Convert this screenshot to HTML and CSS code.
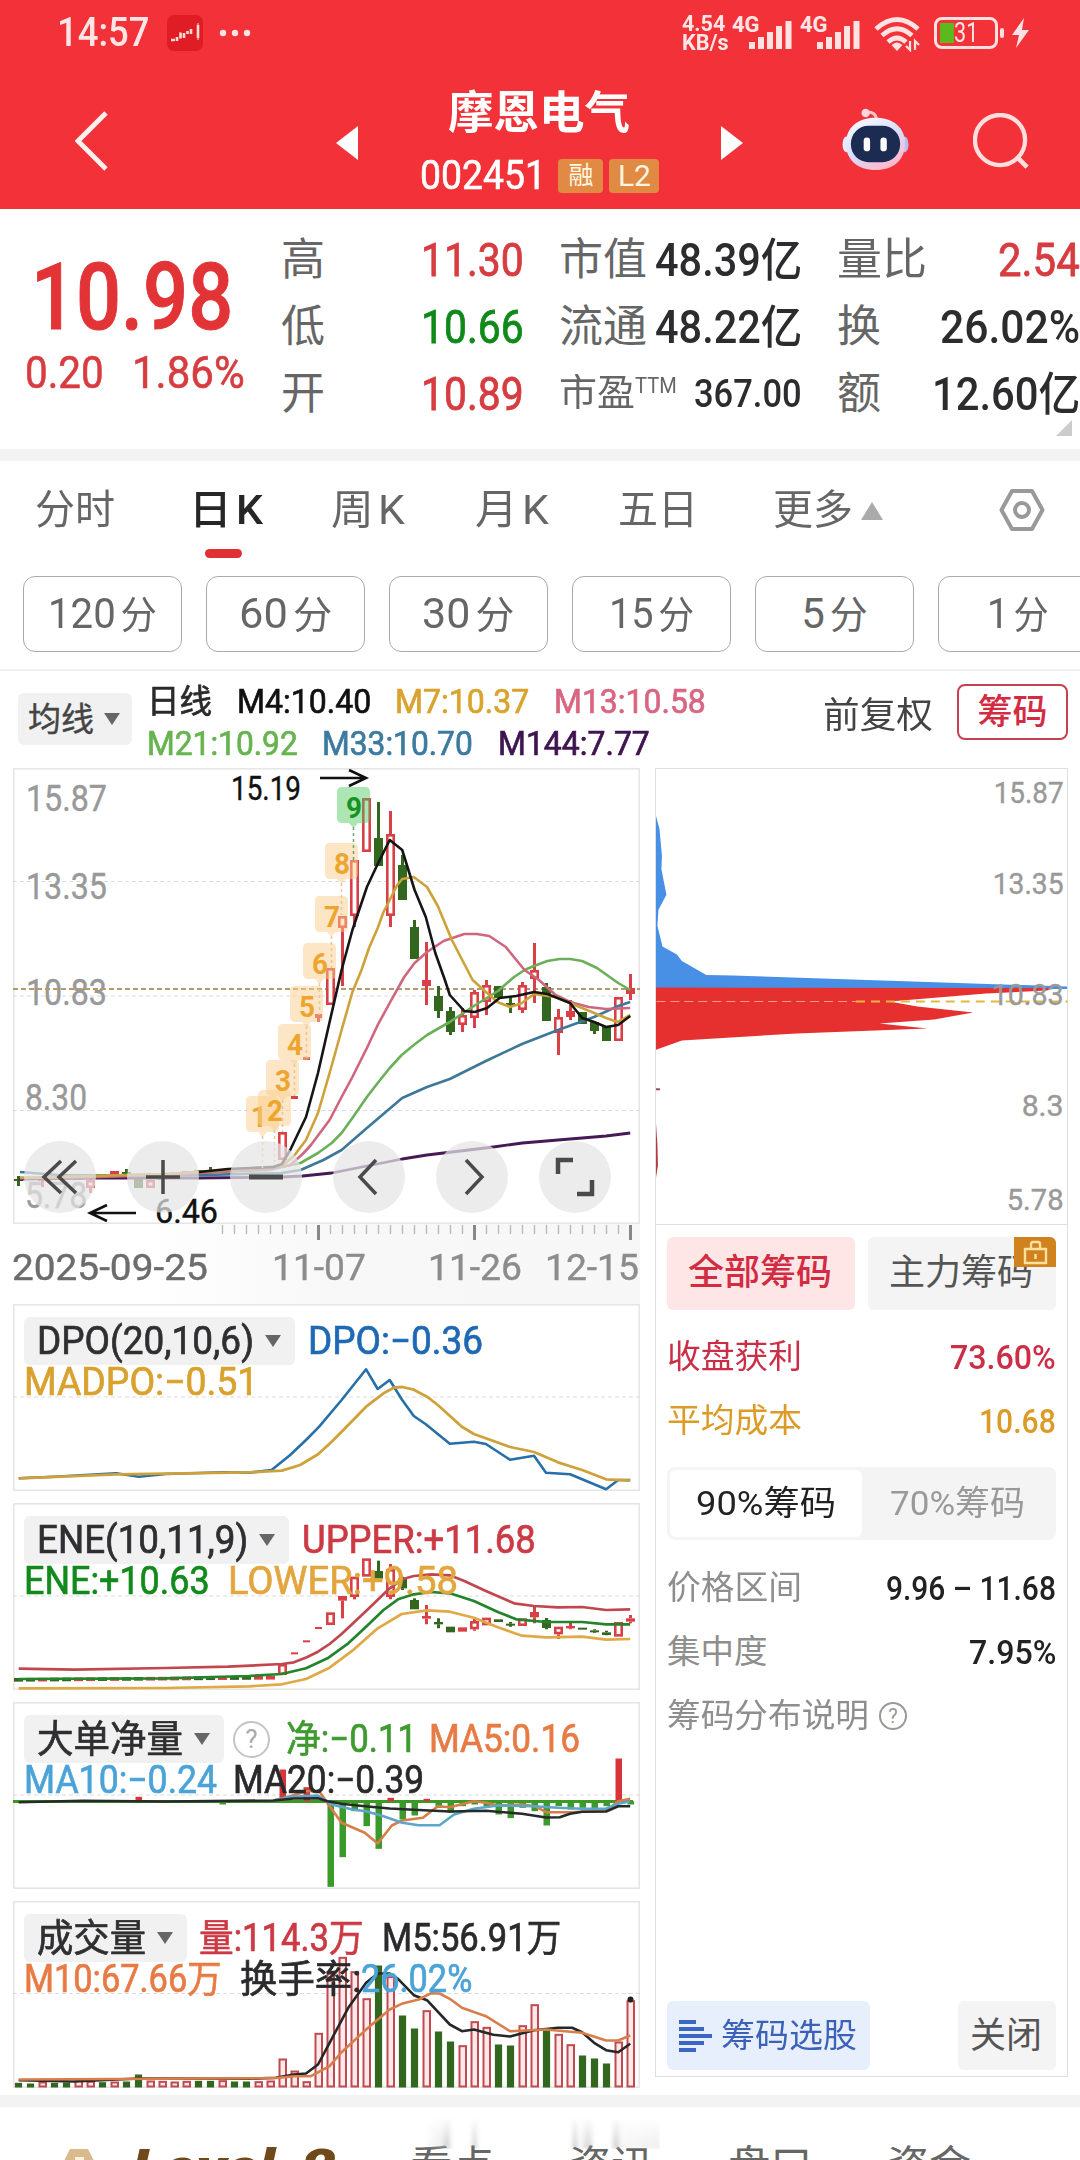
FILE: index.html
```html
<!DOCTYPE html>
<html lang="zh-CN">
<head>
<meta charset="utf-8">
<title>摩恩电气 002451</title>
<link rel="stylesheet" href="styles.css">
</head>
<body>
<div class="app">
  <header class="header">
    <div class="status">
      <span class="clock" data-w="92">14:57</span>
      <svg class="app-icon" viewBox="0 0 36 36"><rect width="36" height="36" rx="7" fill="#e01d24"/><path d="M4 25h4M10 22v4M13.500 17.500v6M17 18v5M20.500 19v-3M24 14v5M31 10v13" stroke="#ffdcd4" stroke-width="2.600" fill="none"/><path d="M31 8v17" stroke="#ffdcd4" stroke-width="1"/></svg>
      <svg class="more-dots" viewBox="0 0 32 8"><g fill="#ffe3e3"><circle cx="4" cy="4" r="3.200"/><circle cx="16" cy="4" r="3.200"/><circle cx="28" cy="4" r="3.200"/></g></svg>
      <span class="grow"></span>
      <span class="net"><span data-w="47">4.54</span><span data-w="47">KB/s</span></span>
      <span class="signal"><span class="gen" data-w="28">4G</span><svg viewBox="0 0 44 32"><path d="M4 31v-7M13 31v-12M22 31v-17M31 31v-23M40.500 31v-28" stroke="#ffe3e3" stroke-width="6"/></svg></span>
      <span class="signal"><span class="gen" data-w="28">4G</span><svg viewBox="0 0 44 32"><path d="M4 31v-7M13 31v-12M22 31v-17M31 31v-23M40.500 31v-28" stroke="#ffe3e3" stroke-width="6"/></svg></span>
      <svg class="wifi" viewBox="0 0 46 36"><g fill="none" stroke="#ffe3e3" stroke-width="4.800"><path d="M2 13Q23 -6 44 13"/><path d="M8 19.500Q23 6 38 19.500"/><path d="M14 26Q23 18 32 26"/></g><path d="M17.500 29Q23 24 28.500 29L23 35Z" fill="#ffe3e3"/><path d="M36 25v9l-4-4M41 34v-9l4 4" fill="none" stroke="#ffe3e3" stroke-width="2.200"/></svg>
      <span class="battery"><span data-w="24">31</span></span>
      <svg class="bolt" viewBox="0 0 17 30"><path d="M12 0L0 17h7L4 30L17 12h-7Z" fill="#ffe3e3"/></svg>
    </div>
    <div class="nav">
      <svg class="back" viewBox="0 0 33 60"><path d="M31 2L3 30L31 58" fill="none" stroke="#fff0f0" stroke-width="4.800"/></svg>
      <svg class="prev" viewBox="0 0 22 34"><path d="M22 0L0 17L22 34Z" fill="#fff"/></svg>
      <div class="title">
        <div class="name" data-w="182">摩恩电气</div>
        <div class="code"><span data-w="126">002451</span><span class="chip chip-rong">融</span><span class="chip chip-l2">L2</span></div>
      </div>
      <svg class="next" viewBox="0 0 22 34"><path d="M0 0L22 17L0 34Z" fill="#fff"/></svg>
      <svg class="robot" viewBox="0 0 68 64">
        <defs><linearGradient id="shell" x1="0" y1="0" x2="0.600" y2="1"><stop offset="0" stop-color="#fff"/><stop offset=".6" stop-color="#d5dcfa"/><stop offset="1" stop-color="#ffb9cc"/></linearGradient></defs>
        <path d="M26 4Q34 4 35 11" fill="none" stroke="#ffc4cc" stroke-width="3"/><circle cx="24" cy="5" r="4.300" fill="#ffd6de"/>
        <ellipse cx="4.500" cy="37" rx="4" ry="8" fill="#e8eaff"/><ellipse cx="63.500" cy="37" rx="4" ry="8" fill="#b7bdf5"/>
        <path d="M34 10C52 10 64 20 64 36C64 53 52 63 34 63C16 63 4 53 4 36C4 20 16 10 34 10Z" fill="url(#shell)"/>
        <rect x="9" y="18" width="50" height="37" rx="18" fill="#1c2b52"/>
        <rect x="22" y="30" width="6.500" height="14" rx="3.200" fill="#fff"/><rect x="39" y="30" width="6.500" height="14" rx="3.200" fill="#fff"/>
      </svg>
      <svg class="search" viewBox="0 0 58 58"><circle cx="27.500" cy="27.500" r="25.500" fill="none" stroke="#ffdede" stroke-width="4.400"/><path d="M44 44L55 55" stroke="#ffdede" stroke-width="4.800"/></svg>
    </div>
  </header>

  <section class="quote">
    <div class="last">
      <div class="price" data-w="202">10.98</div>
      <div class="change"><span data-w="79">0.20</span><span data-w="113">1.86%</span></div>
    </div>
    <div class="stats">
      <div class="stat"><span class="k">高</span><span class="v up" data-w="103">11.30</span></div>
      <div class="stat"><span class="k" data-w="88">市值</span><span class="v" data-w="147">48.39亿</span></div>
      <div class="stat"><span class="k" data-w="90">量比</span><span class="v up" data-w="82">2.54</span></div>
      <div class="stat"><span class="k">低</span><span class="v down" data-w="103">10.66</span></div>
      <div class="stat"><span class="k" data-w="88">流通</span><span class="v" data-w="147">48.22亿</span></div>
      <div class="stat"><span class="k">换</span><span class="v" data-w="140">26.02%</span></div>
      <div class="stat"><span class="k">开</span><span class="v up" data-w="103">10.89</span></div>
      <div class="stat small"><span class="k"><span data-w="76">市盈</span><sup data-w="42">TTM</sup></span><span class="v" data-w="108">367.00</span></div>
      <div class="stat"><span class="k">额</span><span class="v" data-w="148">12.60亿</span></div>
    </div>
    <svg class="corner" viewBox="0 0 16 16"><path d="M16 0V16H0Z" fill="#ccc"/></svg>
  </section>

  <nav class="tabs">
    <span class="tab" data-w="80">分时</span>
    <span class="tab on"><span data-w="74">日<i>K</i></span></span>
    <span class="tab" data-w="74">周<i>K</i></span>
    <span class="tab" data-w="74">月<i>K</i></span>
    <span class="tab" data-w="80">五日</span>
    <span class="tab more"><span data-w="80">更多</span><svg viewBox="0 0 22 18"><path d="M11 0L22 18H0Z" fill="#aaa"/></svg></span>
    <svg class="gear" viewBox="0 0 46 44"><path d="M13 3H33L43.500 22L33 41H13L2.500 22Z" fill="none" stroke="#999" stroke-width="4" stroke-linejoin="round"/><circle cx="23" cy="22" r="7" fill="none" stroke="#999" stroke-width="4"/></svg>
  </nav>
  <div class="periods">
    <span class="period"><span data-w="109">120<i>分</i></span></span>
    <span class="period"><span data-w="93">60<i>分</i></span></span>
    <span class="period"><span data-w="92">30<i>分</i></span></span>
    <span class="period"><span data-w="85">15<i>分</i></span></span>
    <span class="period"><span data-w="67">5<i>分</i></span></span>
    <span class="period"><span data-w="62">1<i>分</i></span></span>
  </div>

  <section class="ma-bar">
    <span class="pick pick-ma"><span data-w="66">均线</span><b class="caret"></b></span>
    <div class="ma-list">
      <div class="ma-row"><span class="ink" data-w="65">日线</span><span class="c-black" data-w="134">M4:10.40</span><span class="c-gold" data-w="134">M7:10.37</span><span class="c-pink" data-w="152">M13:10.58</span></div>
      <div class="ma-row"><span class="c-green" data-w="151">M21:10.92</span><span class="c-blue" data-w="151">M33:10.70</span><span class="c-violet" data-w="152">M144:7.77</span></div>
    </div>
    <span class="adjust" data-w="110">前复权</span>
    <span class="chips-btn">筹码</span>
  </section>

  <section class="board">
    <div class="charts">
      <div class="kline">
        <svg id="kline" viewBox="0 0 627 456"></svg>
        <div class="controls">
          <span class="ctl"><svg viewBox="0 0 40 40"><path d="M21 4L4 20L21 36M36 4L19 20L36 36"/></svg></span>
          <span class="ctl"><svg viewBox="0 0 40 40"><path d="M3 20H37M20 3V37"/></svg></span>
          <span class="ctl"><svg viewBox="0 0 40 40"><path d="M3 20H37" stroke-width="5"/></svg></span>
          <span class="ctl"><svg viewBox="0 0 40 40"><path d="M27 3L11 20L27 37"/></svg></span>
          <span class="ctl"><svg viewBox="0 0 40 40"><path d="M14 3L30 20L14 37"/></svg></span>
          <span class="ctl"><svg viewBox="0 0 40 40"><path d="M3 17V3H18M37 23V37H22" stroke-width="4.500"/></svg></span>
        </div>
      </div>
      <div class="axis">
        <svg id="ticks" viewBox="0 0 627 18"></svg>
        <div class="dates"><span class="dark" data-w="196">2025-09-25</span><span data-w="94">11-07</span><span data-w="94">11-26</span><span data-w="94">12-15</span></div>
      </div>
      <div class="panel">
        <svg id="dpo" viewBox="0 0 627 187"></svg>
        <div class="legend">
          <div class="lg"><span class="pick"><span data-w="217">DPO(20,10,6)</span><b class="caret"></b></span><span class="c-dpo g14" data-w="175">DPO:−0.36</span></div>
          <div class="lg"><span class="c-gold2" data-w="234">MADPO:−0.51</span></div>
        </div>
      </div>
      <div class="panel">
        <svg id="ene" viewBox="0 0 627 187"></svg>
        <div class="legend">
          <div class="lg"><span class="pick"><span data-w="211">ENE(10,11,9)</span><b class="caret"></b></span><span class="c-red g14" data-w="234">UPPER:+11.68</span></div>
          <div class="lg"><span class="c-dgreen" data-w="186">ENE:+10.63</span><span class="c-amber g18" data-w="230">LOWER:+9.58</span></div>
        </div>
      </div>
      <div class="panel">
        <svg id="flow" viewBox="0 0 627 187"></svg>
        <div class="legend">
          <div class="lg"><span class="pick"><span data-w="146">大单净量</span><b class="caret"></b></span><span class="ask ask-lg">?</span><span class="c-lime g16" data-w="131">净:−0.11</span><span class="c-orange g12" data-w="151">MA5:0.16</span></div>
          <div class="lg"><span class="c-sky" data-w="193">MA10:−0.24</span><span class="ink g16" data-w="191">MA20:−0.39</span></div>
        </div>
      </div>
      <div class="panel">
        <svg id="volume" viewBox="0 0 627 187"></svg>
        <div class="legend">
          <div class="lg"><span class="pick"><span data-w="109">成交量</span><b class="caret"></b></span><span class="c-red g12" data-w="165">量:114.3万</span><span class="ink g18" data-w="179">M5:56.91万</span></div>
          <div class="lg"><span class="c-orange" data-w="198">M10:67.66万</span><span class="ink g18" data-w="121">换手率:</span><span class="c-sky" data-w="111">26.02%</span></div>
        </div>
      </div>
    </div>

    <aside class="side">
      <svg id="chips" viewBox="0 0 412 456"></svg>
      <div class="side-body">
        <div class="switch"><span class="sw on">全部筹码</span><span class="sw">主力筹码<b class="lock"><svg viewBox="0 0 42 30"><path d="M11 12h21v14H11ZM17 12V7q0-2 2-2h5q2 0 2 2v5M21.500 17v5" fill="none" stroke="#ffe0a0" stroke-width="2.400"/></svg></b></span></div>
        <div class="row crimson"><span data-w="135">收盘获利</span><b data-w="106">73.60%</b></div>
        <div class="row gold"><span data-w="135">平均成本</span><b data-w="77">10.68</b></div>
        <div class="seg"><span class="seg-i on"><span data-w="140">90%筹码</span></span><span class="seg-i"><span data-w="135">70%筹码</span></span></div>
        <div class="row"><span data-w="135">价格区间</span><b data-w="170">9.96 – 11.68</b></div>
        <div class="row"><span data-w="101">集中度</span><b data-w="87">7.95%</b></div>
        <div class="row note"><span data-w="202">筹码分布说明</span><span class="ask">?</span></div>
        <div class="foot">
          <span class="pick-stock"><svg viewBox="0 0 33 32"><path d="M0 2H17M0 9H25M0 16H33M0 23H25M0 30H17" stroke="#3c66c4" stroke-width="4"/></svg><span data-w="136">筹码选股</span></span>
          <span class="close">关闭</span>
        </div>
      </div>
    </aside>
  </section>

  <footer class="bottom">
    <svg class="badge" viewBox="0 0 38 42"><path d="M10 2H28L37 20L28 40H10L1 20Z" fill="#d9ba8c"/><path d="M15 10h9v12h-9z" fill="#fff3dc"/></svg>
    <b class="level" data-w="204">Level-2</b>
    <span class="bt bt1">看点</span><span class="bt">资讯</span><span class="bt">盘口</span><span class="bt">资金</span>
    <span class="smear"></span>
  </footer>
</div>
<script src="charts.js"></script>
</body>
</html>
```
FILE: styles.css
```css
* { box-sizing: border-box; }
body { margin: 0; background: #fff; font-family: Roboto, "Noto Sans CJK SC", sans-serif; color: #333; }
svg { display: block; flex: none; }
i { font-style: normal; }
[data-w] { display: inline-block; white-space: nowrap; flex: none; transform-origin: 0 50%; }
.app { width: 1080px; height: 2160px; overflow: hidden; display: flex; flex-direction: column; line-height: 1; }
.grow { flex: 1; }

.header { height: 209px; flex: none; background: #f23138; color: #fff; }
.status { height: 66px; padding: 0 51px 0 57px; display: flex; align-items: center; color: #ffe6e6; }
.clock { font-size: 40px; font-weight: 500; }
.app-icon { width: 36px; height: 36px; margin-left: 18px; }
.more-dots { width: 32px; height: 8px; margin-left: 16px; }
.net { display: flex; flex-direction: column; font-size: 22px; font-weight: 700; line-height: 19px; margin-right: 1px; }
.signal { display: flex; align-items: flex-start; width: 65px; height: 34px; margin-left: 3px; }
.signal svg { width: 44px; height: 32px; margin: 2px 0 0 -12px; }
.gen { font-size: 22px; font-weight: 700; line-height: 17px; }
.wifi { width: 46px; height: 36px; margin: 2px 0 0 9px; }
.battery { width: 64px; height: 32px; margin-left: 14px; border: 3px solid #ffe0e0; border-radius: 8px; display: flex; align-items: center; justify-content: center; font-size: 27px; background: linear-gradient(#5cb81c, #5cb81c) 3px 50% / 14px 20px no-repeat; position: relative; }
.battery::after { content: ""; position: absolute; right: -9px; top: 8px; width: 4px; height: 10px; border-radius: 2px; background: #ffe0e0; }
.bolt { width: 17px; height: 30px; margin-left: 14px; }

.nav { height: 143px; display: flex; align-items: center; padding-left: 75px; }
.back { width: 33px; height: 60px; margin-top: 6px; }
.prev { width: 22px; height: 34px; margin: 10px 0 0 228px; }
.title { width: 363px; display: flex; flex-direction: column; align-items: center; padding-top: 8px; }
.name { font-size: 45px; font-weight: 700; margin-top: 3px; }
.code { display: flex; align-items: center; font-size: 40px; height: 40px; margin-top: 20px; -webkit-text-stroke: .6px; }
.chip { height: 34px; border-radius: 4px; background: #e08a44; color: #fff6e0; display: flex; align-items: center; justify-content: center; -webkit-text-stroke: 0; }
.chip-rong { width: 45px; margin-left: 13px; font-size: 25px; }
.chip-l2 { width: 50px; margin-left: 6px; font-size: 30px; }
.next { width: 22px; height: 34px; margin-top: 10px; }
.robot { width: 67px; height: 63px; margin: 4px 0 0 99px; }
.search { width: 57px; height: 57px; margin: 8px 0 0 64px; }

.quote { height: 252px; flex: none; border-bottom: 12px solid #f3f3f3; display: flex; position: relative; }
.last { width: 281px; padding: 41px 0 0 25px; }
.price { font-size: 93px; font-weight: 500; color: #e23437; height: 96px; line-height: 96px; margin-left: 6px; -webkit-text-stroke: 1px; }
.change { display: flex; gap: 28px; font-size: 45px; color: #d63c40; margin-top: 4px; -webkit-text-stroke: .6px; }
.stats { flex: 1; display: grid; grid-template-columns: 243px 243px 243px; column-gap: 35px; grid-auto-rows: 67px; margin-top: 17px; }
.stat { display: flex; align-items: center; justify-content: space-between; }
.k { font-size: 44px; color: #666; line-height: 66px; }
.v { font-size: 46px; font-weight: 500; line-height: 66px; color: #2c2c2e; }
.up { color: #d63c40; font-weight: 400; -webkit-text-stroke: .8px; }
.down { color: #0f8a1a; font-weight: 400; -webkit-text-stroke: .8px; }
.small .k { font-size: 37px; display: flex; }
.small .v { font-size: 39px; }
sup { font-size: 22px; line-height: 50px; }
.corner { position: absolute; right: 8px; bottom: 13px; width: 16px; height: 16px; }

.tabs { height: 115px; flex: none; display: flex; align-items: center; padding: 0 35px 18px; font-size: 41px; color: #666; }
.tab { height: 50px; line-height: 50px; }
.tab i { margin-left: 4px; }
.tab + .tab { margin-left: 70px; }
.tab.on, .tab + .tab.on { margin-left: 74px; color: #262626; font-weight: 500; position: relative; }
.tab.on::after { content: ""; position: absolute; left: 16px; bottom: -23px; width: 37px; height: 9px; border-radius: 5px; background: #e03034; }
.tab.on + .tab { margin-left: 68px; }
.more { display: flex; align-items: center; gap: 8px; }
.tab + .tab.more { margin-left: 75px; }
.more svg { width: 22px; height: 18px; margin-top: 3px; }
.gear { width: 46px; height: 44px; margin-left: auto; }
.periods { height: 95px; flex: none; display: flex; gap: 24px; padding-left: 23px; border-bottom: 2px solid #f0f0f0; overflow: hidden; }
.period { width: 159px; height: 76px; flex: none; border: 1.500px solid #aaa; border-radius: 12px; display: flex; align-items: center; justify-content: center; font-size: 42px; color: #666; }
.period i { font-size: 38px; margin-left: 5px; }

.ma-bar { height: 97px; flex: none; display: flex; padding-left: 18px; font-size: 33px; }
.pick { height: 48px; display: flex; align-items: center; padding: 0 14px 0 13px; background: #f1f1f2; border-radius: 6px; color: #2f2f31; -webkit-text-stroke: .4px; }
.pick-ma { width: 114px; height: 52px; margin-top: 22px; padding: 0 11px 0 10px; gap: 10px; color: #444; }
.caret { width: 0; height: 0; flex: none; border: solid transparent; border-width: 12px 8px 0; border-top-color: #666; margin-left: 11px; }
.pick-ma .caret { margin-left: 0; }
.ma-list { width: 691px; padding: 9px 0 0 15px; }
.ma-row { display: flex; gap: 24.500px; height: 42px; align-items: center; }
.adjust { font-size: 36px; margin: 27px 0 0; color: #444; }
.chips-btn { width: 111px; height: 56px; margin: 13px 0 0 24px; border: 2px solid #c8414f; border-radius: 8px; font-size: 35px; font-weight: 500; color: #d22b42; display: flex; align-items: center; justify-content: center; }
.ink { color: #2a2a2c; }
.c-black { color: #111; } .c-gold { color: #d9a32e; } .c-pink { color: #d96680; } .c-green { color: #66b44f; }
.c-blue { color: #3d7aa0; } .c-violet { color: #3f1450; } .c-dpo { color: #1e69b3; } .c-gold2 { color: #d9a12e; }
.c-red { color: #cc3a44; } .c-dgreen { color: #128a1c; } .c-amber { color: #e3a63e; } .c-lime { color: #3f9a30; }
.c-orange { color: #e87b45; } .c-sky { color: #4ba3d8; }
.ma-row span, .lg > span { -webkit-text-stroke: .7px; }

.board { height: 1327px; flex: none; display: flex; padding-left: 13px; }
.charts { width: 627px; }
.kline { position: relative; height: 456px; }
.kline > svg { width: 627px; height: 456px; }
.controls { position: absolute; left: 11px; top: 373px; display: flex; gap: 31px; }
.ctl { width: 72px; height: 72px; border-radius: 50%; background: rgba(229,229,229,.72); display: flex; align-items: center; justify-content: center; }
.ctl svg { width: 40px; height: 40px; fill: none; stroke: #4a4a4a; stroke-width: 3.500; }
.axis { height: 80px; background: linear-gradient(90deg, #fff 20%, #f8f8f8 50%, #f7f7f7); }
.axis > svg { width: 627px; height: 18px; }
.dates { display: flex; font-size: 36px; height: 51px; align-items: center; color: #8c8c8c; margin-left: -1px; -webkit-text-stroke: .4px; }
.dates .dark { color: #6c6c6c; }
.dates span:nth-child(2) { margin-left: 64px; }
.dates span:nth-child(3) { margin-left: 62px; }
.dates span:nth-child(4) { margin-left: 23px; }
.panel { position: relative; height: 187px; margin-bottom: 12px; }
.panel > svg { width: 627px; height: 187px; }
.legend { position: absolute; left: 11px; top: 13px; font-size: 38px; }
.lg { display: flex; align-items: center; height: 48px; white-space: nowrap; }
.lg + .lg { height: 34px; }
.g12 { margin-left: 12px; } .g14 { margin-left: 13px; } .g16 { margin-left: 16px; } .g18 { margin-left: 18px; }
.ask { width: 28px; height: 28px; border: 2px solid #999; border-radius: 50%; display: inline-flex; align-items: center; justify-content: center; font-size: 20px; color: #999; }
.lg > .ask-lg { width: 37px; height: 37px; margin-left: 9px; border-color: #c4c4c4; font-size: 26px; color: #aaa; -webkit-text-stroke: 0; }

.side { width: 413px; height: 1309px; margin-left: 15px; border: 1.500px solid #dedede; display: flex; flex-direction: column; }
.side > svg { width: 412px; height: 455px; }
.side-body { flex: 1; border-top: 1px solid #dedede; padding: 12px 11px 6px; display: flex; flex-direction: column; }
.switch { display: flex; gap: 13px; height: 73px; margin-bottom: 15px; }
.sw { flex: 1; position: relative; border-radius: 6px; background: #f4f4f4; font-size: 36px; color: #555; display: flex; align-items: center; justify-content: center; padding: 0 2px 2px 0; }
.sw.on { background: #fee6e7; color: #d22b42; font-weight: 500; }
.lock { position: absolute; right: 0; top: 0; width: 42px; height: 30px; background: #d0821c; border-radius: 0 6px 0 0; }
.row { display: flex; justify-content: space-between; align-items: center; height: 64px; font-size: 33.500px; color: #8e8e8e; }
.row b { font-weight: 500; color: #222; font-size: 34px; }
.crimson, .row.crimson b { color: #cb2f47; }
.gold, .row.gold b { color: #dc9a26; }
.seg { height: 73px; margin: 14px 0 16px; background: #f4f4f4; border-radius: 8px; padding: 3px; display: flex; }
.seg-i { flex: 1; display: flex; align-items: center; justify-content: center; font-size: 34px; color: #999; padding-bottom: 1px; }
.seg-i.on { background: #fff; border-radius: 6px; color: #222; }
.row.note { justify-content: flex-start; gap: 10px; }
.foot { margin-top: auto; height: 69px; display: flex; justify-content: space-between; }
.pick-stock { width: 203px; border-radius: 6px; background: #e8effc; color: #3b62b8; font-size: 33.500px; display: flex; align-items: center; gap: 9px; padding-left: 12px; }
.pick-stock svg { width: 33px; height: 32px; }
.close { width: 98px; border-radius: 6px; background: #f4f4f4; color: #555; font-size: 36px; display: flex; align-items: center; justify-content: center; padding-right: 2px; }

.bottom { height: 90px; flex: none; border-top: 12px solid #f3f3f3; padding: 39px 0 0 60px; display: flex; align-items: flex-start; position: relative; font-size: 42px; color: #666; white-space: nowrap; }
.badge { width: 38px; height: 42px; margin-top: 1px; }
.level { margin-left: 34px; font-style: italic; font-weight: 900; font-size: 48px; line-height: 42px; color: #70491b; }
.bt { margin-right: 75px; }
.bt1 { margin-left: 74px; }
.smear { position: absolute; left: 415px; top: 10px; width: 245px; height: 32px; filter: blur(2px); opacity: .5; background: linear-gradient(90deg, transparent 4%, #ccc 12%, #777 13%, transparent 15%, transparent 23%, #888 24%, transparent 26%, transparent 64%, #777 65%, transparent 67%, #999 71%, transparent 73%, transparent 80%, #888 82%, #eee 84%, #ddd 100%); -webkit-mask: linear-gradient(transparent, #000); mask: linear-gradient(transparent, #000); }
```
FILE: charts.js
```js
// Condense or widen labels so that every figure takes its column width.
document.querySelectorAll('[data-w]').forEach(function (el) {
  var natural = el.offsetWidth, w = +el.dataset.w;
  el.style.transform = 'scaleX(' + (w / natural).toFixed(4) + ')';
  el.style.marginRight = (w - natural) + 'px';
});

var RED = '#d94045', GREEN = '#33671f', STEP = 12, FIRST = 5.5;
function bx(i) { return FIRST + STEP * i; }
function gx(x) { return x / 2.412 - 13; }
function line(pts, color, y, w) {
  var p = pts.map(function (q) { return [gx(q[0]), y(q[1])]; });
  var d = 'M' + p[0][0].toFixed(1) + ' ' + p[0][1].toFixed(1);
  for (var i = 1; i < p.length; i++) d += 'L' + p[i][0].toFixed(1) + ' ' + p[i][1].toFixed(1);
  return '<path d="' + d + '" fill="none" stroke="' + color + '" stroke-width="' + (w || 2.6) + '" stroke-linejoin="round"/>';
}
// c: [index, kind, bodyTop, bodyBottom, wickTop, wickBottom]
function candle(c, y, w) {
  var x = bx(c[0]), t = y(c[2]), b = y(c[3]), s = '', col = c[1] === 'g' ? GREEN : RED;
  if (c[4] != null) s += '<path d="M' + x + ' ' + y(c[4]) + 'V' + t + 'M' + x + ' ' + b + 'V' + y(c[5]) + '" stroke="' + col + '" stroke-width="3"/>';
  if (c[1] === 'r' && b - t > 7) s += '<rect x="' + (x - w / 2 + 1.3) + '" y="' + (t + 1.3) + '" width="' + (w - 2.6) + '" height="' + (b - t - 2.6) + '" fill="#fff" stroke="' + col + '" stroke-width="2.6"/>';
  else s += '<rect x="' + (x - w / 2) + '" y="' + t + '" width="' + w + '" height="' + Math.max(b - t, 2) + '" fill="' + col + '"/>';
  return s;
}
function frame(w, h) { return '<rect x="0.800" y="0.800" width="' + (w - 1.6) + '" height="' + (h - 1.6) + '" fill="none" stroke="#e6e6e8" stroke-width="1.600"/>'; }
function dash(y, color, w, a) { return '<path d="M0 ' + y + 'H627" stroke="' + (color || '#dcdcdc') + '" stroke-width="' + (w || 1.2) + '" stroke-dasharray="' + (a || '4 3') + '"/>'; }
function label(x, cy, t, w, size, color, extra) {
  return '<text x="' + x + '" y="' + (cy + size * 0.355) + '" font-size="' + size + '" fill="' + color + '" textLength="' + w + '" lengthAdjust="spacingAndGlyphs" ' + (extra || '') + '>' + t + '</text>';
}
function draw(id, s) { document.getElementById(id).innerHTML = s; }

(function () {
  var y = function (v) { return v - 768; };
  var s = frame(627, 456) + dash(113.5) + dash(228) + dash(342.5);
  var a = 'stroke="#999" stroke-width="0.400"';
  s += label(13, 30, '15.87', 81, 37, '#999', a) + label(13, 118, '13.35', 81, 37, '#999', a) + label(13, 224, '10.83', 81, 37, '#999', a) + label(12, 329, '8.30', 62, 37, '#999', a) + label(12, 427, '5.78', 62, 37, '#999', a);
  s += dash(221, '#b79a6a', 2, '5 3');
  var c = [
    [0,'g',1179,1181,1176,1186],[1,'g',1177,1179],[2,'r',1176,1181,1176,1187],[3,'r',1177,1179],[4,'g',1176,1179],[5,'r',1176,1180],[6,'r',1180,1188,1176,1193],
    [7,'r',1174,1177],[8,'r',1171,1175],[9,'g',1172,1174,1169,1177],[10,'g',1176,1188],[11,'r',1180,1188],[12,'r',1176,1180],[13,'r',1172,1176],[14,'r',1171,1174],[15,'g',1170,1172],[16,'g',1170,1172,1167,1174],[17,'r',1169,1172],[18,'g',1170,1172],[19,'g',1169,1171],[20,'r',1168,1171],[21,'r',1168,1170],
    [22,'r',1132,1160],[23,'r',1096,1099],[24,'r',1057,1060],[25,'r',1014,1018,1014,1022],[26,'r',968,1005],[27,'r',916,928,916,986],[28,'r',860,916,860,927],[29,'r',798,852],
    [30,'g',838,866,802,866],[31,'r',834,916,811,927],[32,'g',865,900,855,900],[33,'g',927,959,920,959],[34,'r',980,986,942,1005],[35,'g',996,1011,986,1018],[36,'g',1011,1032,1007,1035],[37,'r',1015,1025,1008,1032],[38,'r',992,1018,990,1028],[39,'r',985,1002,980,1015],[40,'g',986,998],[41,'g',1003,1006,996,1013],[42,'r',985,1010,982,1013],[43,'r',970,979,943,1003],[44,'g',987,1021,983,1021],[45,'r',1017,1033,1009,1055],[46,'r',1011,1017,1000,1020],[47,'g',1012,1024],[48,'g',1022,1031,1022,1034],[49,'g',1027,1041],[50,'r',997,1041],[51,'r',988,994,974,1000]];
  c.forEach(function (k) { s += candle(k, y, k[0] === 24 || k[0] === 23 || k[0] === 25 ? 7 : 9); });
  s += line([[45,1179],[240,1178],[480,1178],[680,1177],[730,1176],[800,1173],[970,1159],[1030,1155],[1070,1153],[1190,1147],[1260,1143],[1346,1140],[1404,1138],[1462,1136],[1520,1133]], '#451a55', y, 2.8);
  s += line([[48,1172],[140,1175],[400,1176],[680,1173],[725,1170],[780,1160],[824,1150],[885,1128],[970,1098],[1030,1087],[1085,1079],[1172,1061],[1259,1044],[1346,1030],[1433,1017],[1491,1006],[1520,1002]], '#3d7899', y, 2.6);
  s += line([[48,1178],[400,1174],[650,1170],[690,1166],[725,1163],[767,1153],[800,1143],[824,1133],[850,1118],[885,1097],[911,1083],[940,1068],[969,1055],[998,1045],[1030,1035],[1085,1022],[1143,1006],[1201,991],[1240,977],[1265,970],[1288,966],[1320,961],[1350,959],[1375,959],[1404,961],[1440,968],[1491,983],[1520,990]], '#6bb058', y);
  s += line([[48,1178],[240,1177],[400,1175],[650,1169],[700,1165],[730,1154],[750,1145],[795,1120],[824,1097],[850,1077],[885,1048],[911,1025],[940,1003],[975,977],[1000,963],[1030,952],[1070,941],[1120,934],[1150,934],[1180,936],[1220,947],[1265,970],[1300,980],[1340,995],[1375,1002],[1420,1007],[1462,1009],[1520,1008]], '#cf667e', y);
  s += line([[48,1178],[400,1174],[540,1170],[680,1166],[709,1156],[738,1140],[767,1113],[795,1073],[824,1030],[850,987],[872,975],[872,975]].slice(0, 9).concat([[850,992],[872,970],[890,948],[911,928],[925,912],[940,900],[958,885],[970,879],[998,877],[1030,887],[1056,906],[1090,940],[1140,980],[1175,993],[1200,1002],[1230,1007],[1259,1003],[1288,994],[1340,997],[1404,1008],[1462,1018],[1490,1022],[1520,1015]]), '#cda23a', y);
  s += line([[480,1172],[550,1169],[660,1167],[680,1164],[700,1150],[738,1117],[767,1073],[795,1022],[824,970],[850,930],[885,887],[911,864],[940,840],[970,850],[1000,890],[1027,917],[1050,953],[1073,980],[1085,995],[1120,1011],[1145,1012],[1175,1008],[1205,998],[1245,996],[1288,992],[1320,994],[1375,1003],[1404,1018],[1433,1022],[1462,1027],[1491,1025],[1520,1016]], '#151515', y);
  // Sequence marks
  [['1',246,1096],['2',258,1090],['3',266,1060],['4',278,1024],['5',290,986],['6',303,943],['7',315,896],['8',325,843],['9',337,787]].forEach(function (m) {
    var x = m[1] - 13, t = m[2] - 768, g = m[0] === '9', cx = x + 16.5;
    s += '<path d="M' + cx + ' ' + (t + 40) + 'v' + (g ? 34 : 32) + '" stroke="' + (g ? '#6fa56f' : '#e8c69a') + '" stroke-width="1.5" stroke-dasharray="3 3"/>';
    s += '<path d="M' + (x + 5) + ' ' + t + 'h23q5 0 5 5v26q0 5 -5 5h-7l-4.500 5l-4.500 -5h-7q-5 0 -5 -5v-26q0 -5 5 -5z" fill="' + (g ? 'rgba(70,200,90,.45)' : 'rgba(252,205,140,.5)') + '"/>';
    s += label(x + (m[0] === '1' ? 5 : 9), t + 21, m[0], 16, 29, g ? '#17941f' : '#eda52f', 'font-weight="700"');
  });
  s += label(218, 20, '15.19', 70, 33, '#111', 'stroke="#111" stroke-width="0.400"') + label(142, 443, '6.46', 63, 33, '#111', 'stroke="#111" stroke-width="0.400"');
  s += '<path d="M307 10H353M336 2L353 10L336 18M123 445H77M94 437L77 445L94 453" fill="none" stroke="#111" stroke-width="2.6"/>';
  draw('kline', s);

  var t = '';
  for (var i = 17; i < 52; i++) { var big = i === 25 || i === 38 || i === 51; t += '<path d="M' + bx(i) + ' 1v' + (big ? 15 : 9) + '" stroke="' + (big ? '#888' : '#bbb') + '" stroke-width="' + (big ? 3 : 1.4) + '"/>'; }
  draw('ticks', t);
})();

(function () {
  var y = function (v) { return v / 3 - 14; };
  var s = frame(627, 187) + dash(93);
  s += line([[45,565],[130,560],[280,550],[335,560],[400,552],[540,547],[600,548],[655,540],[700,495],[738,450],[770,410],[824,330],[883,238],[911,297],[940,270],[970,330],[998,378],[1027,403],[1085,461],[1143,455],[1172,462],[1230,509],[1288,497],[1317,548],[1375,553],[1404,568],[1462,598],[1491,570],[1520,570]], '#266fa8', y, 2.6);
  s += line([[45,565],[280,553],[400,551],[600,547],[680,542],[724,525],[767,493],[800,455],[824,425],[883,350],[925,310],[950,293],[970,291],[998,299],[1030,320],[1056,345],[1114,410],[1143,432],[1230,471],[1288,486],[1346,517],[1404,540],[1462,568],[1520,572]], '#cfa13b', y, 2.8);
  draw('dpo', s);
})();

(function () {
  var y = function (v) { return v / 3 - 213; };
  var s = frame(627, 187) + dash(93), c = [];
  for (var i = 0; i < 22; i++) c.push([i, 'ggrggrrgrggrrrrggrggrr'[i], 1164 - i * .3, 1175 - i * .3]);
  c = c.concat([[22,'r',1122,1155],[23,'r',1087,1093],[24,'r',1051,1057],[25,'r',1011,1017],[26,'r',967,1005],[27,'r',918,932,918,985],[28,'r',860,921,860,928],[29,'r',805,860],[30,'g',843,866,812,866],[31,'r',837,921,822,928],[32,'g',865,895,860,900],[33,'g',930,958,925,958],[34,'r',978,986,945,1003],[35,'g',996,1003,985,1015],[36,'g',1010,1027],[37,'r',1012,1025],[38,'r',993,1018,985,1022],[39,'r',983,1006],[40,'g',988,996],[41,'g',1001,1005,996,1010],[42,'r',985,1008],[43,'r',966,982,950,1000],[44,'g',990,1014,984,1018],[45,'r',1010,1033,1010,1047],[46,'r',1008,1015,995,1018],[47,'g',1013,1019],[48,'g',1021,1025,1018,1028],[49,'g',1027,1035,1022,1036],[50,'r',996,1040],[51,'r',985,995,975,1000]]);
  c.forEach(function (k) { s += candle(k, y, k[0] > 22 && k[0] < 26 ? 7 : 9); });
  s += line([[45,1136],[180,1139],[400,1134],[550,1130],[680,1122],[709,1117],[740,1102],[767,1085],[795,1062],[824,1032],[883,963],[940,895],[970,868],[998,858],[1040,853],[1085,856],[1120,873],[1172,903],[1240,940],[1288,948],[1346,952],[1404,951],[1462,960],[1520,958]], '#c1474f', y, 2.7);
  s += line([[45,1167],[400,1165],[600,1158],[680,1152],[738,1135],[790,1105],[840,1060],[883,1010],[925,960],[960,928],[998,913],[1040,906],[1085,910],[1143,933],[1201,966],[1245,988],[1317,996],[1404,996],[1462,1003],[1520,1003]], '#23842a', y, 2.7);
  s += line([[45,1195],[400,1194],[600,1189],[680,1183],[738,1167],[795,1133],[850,1082],[911,1015],[969,972],[1030,961],[1085,965],[1143,983],[1201,1012],[1259,1037],[1317,1042],[1404,1040],[1462,1049],[1520,1047]], '#dfa945', y, 2.7);
  draw('ene', s);
})();

(function () {
  var y = function (v) { return v / 3 - 12.5; };
  var s = frame(627, 187) + dash(93);
  s += '<path d="M0 99.500H620" stroke="#3c9a22" stroke-width="3"/>';
  [[10,322],[22,240],[24,293],[31,325],[34,328],[50,207]].forEach(function (b) { s += '<rect x="' + (bx(b[0]) - 3) + '" y="' + y(b[1]) + '" width="6.500" height="' + (335 - b[1]) / 3 + '" fill="#d8343a"/>'; });
  [[17,345],[26,592],[27,503],[28,365],[29,410],[30,478],[32,390],[33,378],[35,355],[36,370],[37,350],[38,345],[39,350],[40,375],[41,386],[42,355],[43,365],[44,408],[45,350],[46,360],[47,355],[48,358],[49,350],[51,345]].forEach(function (b) { s += '<rect x="' + (bx(b[0]) - 3) + '" y="' + y(335) + '" width="6.500" height="' + (b[1] - 335) / 3 + '" fill="#3c9a2c"/>'; });
  s += line([[660,333],[700,320],[738,305],[770,305],[795,350],[824,400],[880,430],[911,462],[945,408],[970,393],[1020,385],[1056,350],[1085,353],[1143,335],[1172,340],[1201,348],[1259,345],[1290,350],[1317,368],[1375,368],[1462,364],[1491,335],[1520,328]], '#d67d48', y);
  s += line([[660,333],[700,322],[767,318],[800,345],[850,360],[883,365],[925,380],[970,400],[1010,407],[1060,407],[1095,375],[1143,358],[1201,348],[1288,350],[1346,355],[1404,358],[1462,358],[1491,343],[1520,335]], '#5ba6c9', y);
  s += line([[45,338],[200,334],[400,336],[660,333],[709,327],[767,326],[790,335],[824,343],[880,350],[940,357],[998,361],[1085,366],[1172,364],[1259,373],[1317,384],[1350,383],[1375,373],[1404,367],[1462,366],[1491,350],[1520,350]], '#262a2a', y);
  draw('flow', s);
})();

(function () {
  var y = function (v) { return v / 3 - 211.5; };
  var tops = [1180,1182,1176,1180,1179,1170,1174,1178,1176,1176,1155,1173,1174,1176,1174,1174,1174,1172,1176,1176,1175,1173,1107,1143,1175,1030,850,802,845,926,828,860,978,1017,962,1026,1056,1067,995,1012,1065,1068,1007,944,1024,1033,1064,1098,1107,1122,1056,932];
  var kinds = 'ggrggrrgrggrrrrggrggrrrrrrrrrrgrggrggrrrggrrgrrgggrr';
  var s = frame(627, 187) + dash(92.5);
  tops.forEach(function (t, i) {
    var x = bx(i), h = (1194 - t) / 3;
    s += kinds[i] === 'g' ? '<rect x="' + (x - 3.6) + '" y="' + y(t) + '" width="7.200" height="' + h + '" fill="' + GREEN + '"/>'
      : '<rect x="' + (x - 3) + '" y="' + (y(t) + 1) + '" width="6.500" height="' + (h - 2) + '" fill="#fde9e9" stroke="#c04a50" stroke-width="2"/>';
  });
  s += line([[45,1172],[180,1176],[335,1167],[600,1168],[665,1165],[709,1155],[738,1152],[767,1125],[795,1060],[840,955],[883,880],[911,852],[940,852],[960,868],[998,917],[1030,932],[1085,1005],[1114,1025],[1143,1020],[1190,1036],[1230,1041],[1288,1022],[1346,1015],[1380,1015],[1404,1028],[1433,1060],[1462,1082],[1491,1088],[1520,1063]], '#242828', y);
  s += line([[45,1170],[660,1166],[709,1160],[750,1160],[795,1130],[824,1088],[883,1020],[940,960],[969,943],[1010,930],[1040,911],[1060,912],[1085,928],[1114,955],[1172,980],[1230,1025],[1317,1020],[1404,1030],[1462,1053],[1491,1053],[1520,1038]], '#d97e4b', y, 2.6);
  s += '<circle cx="617.500" cy="98.500" r="3" fill="#222"/>';
  draw('volume', s);
})();

(function () {
  function poly(p, f) { return '<path d="M' + p.map(function (q) { return (q[0] - 656.5) + ' ' + (q[1] - 768); }).join('L') + 'Z" fill="' + f + '"/>'; }
  var s = poly([[656,815],[659.5,828],[662,855],[661.5,868.5],[666.5,894],[658.5,909],[657.5,925],[662.5,946],[677,954],[682,960.5],[706.5,974.5],[733,975],[1068,986],[1068,988.5],[656,988]], '#4790e6');
  s += poly([[656,987],[1053,987.5],[1048,990],[987,993],[890,1001],[918,1006],[974,1012],[935,1019],[880,1023],[928,1028],[797,1033],[682,1040],[656,1049.5]], '#e5302f');
  s += poly([[656,1088],[660,1088],[660,1090],[656,1090]], '#9a4a50') + poly([[656,1122],[657.5,1145],[658,1165],[656,1178]], '#b33c40');
  s += '<path d="M0 233H200" stroke="#f49a90" stroke-width="1.200" stroke-dasharray="9 5"/><path d="M200 233H412" stroke="#e5b83c" stroke-width="2" stroke-dasharray="9 6"/>';
  [['15.87',23,70],['13.35',115,71],['10.83',226,72],['8.3',337,42],['5.78',431,57]].forEach(function (t) { s += label(408 - t[2], t[1], t[0], t[2], 30, '#999', 'stroke="#999" stroke-width="0.400"'); });
  draw('chips', s);
})();
```
